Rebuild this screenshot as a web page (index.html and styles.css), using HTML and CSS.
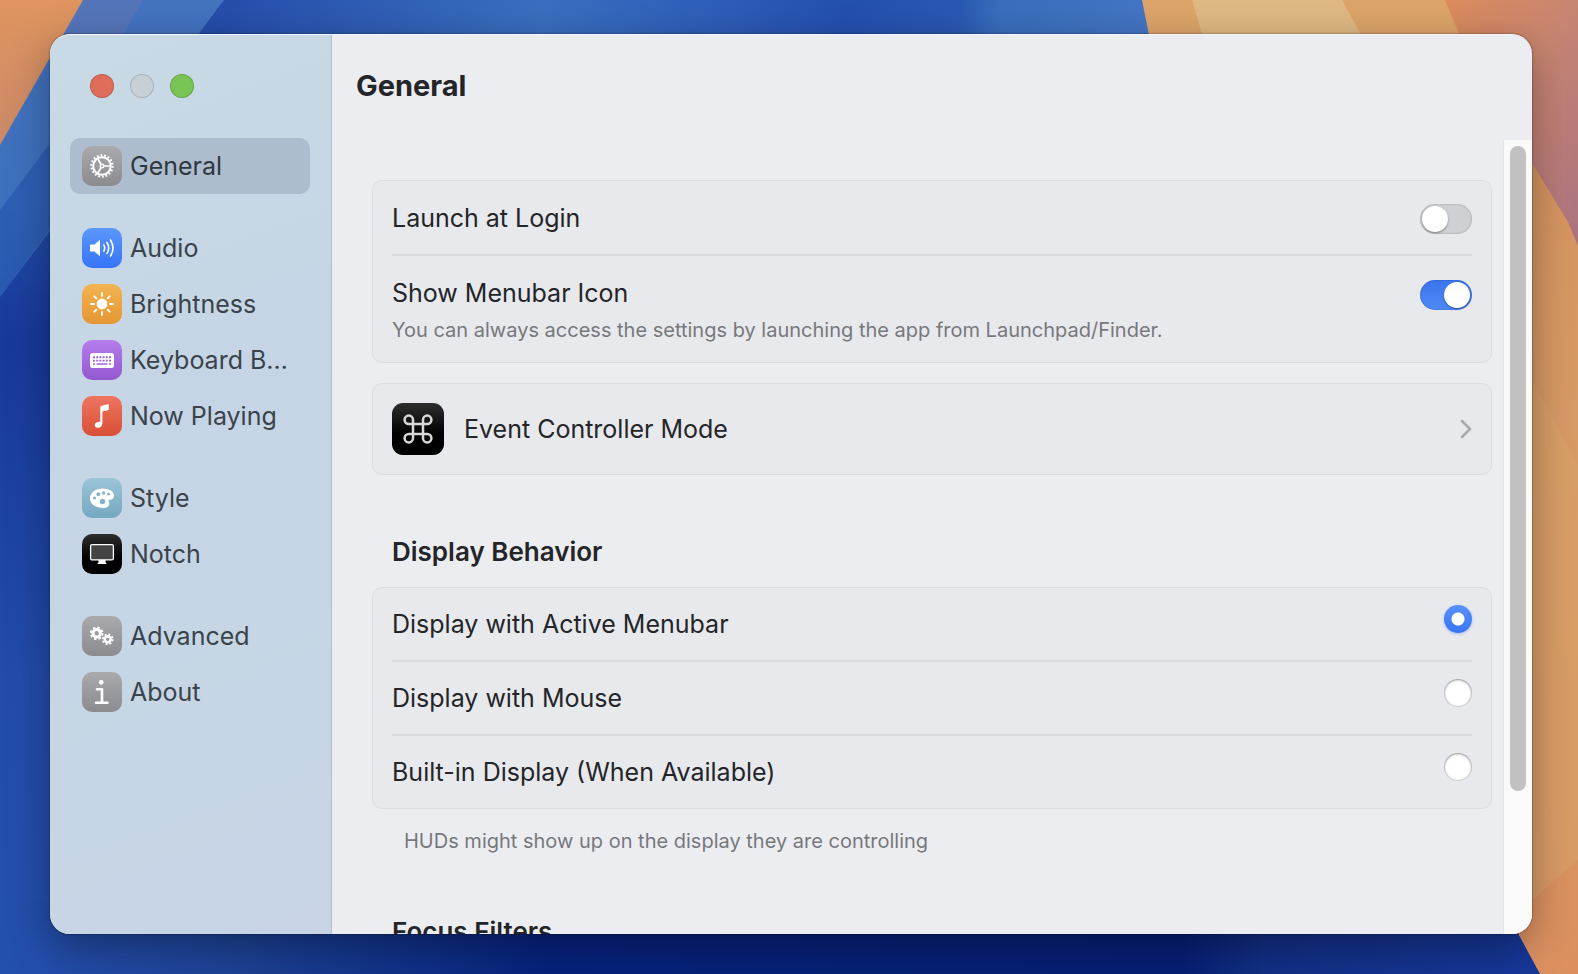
FILE: index.html
```html
<!DOCTYPE html>
<html lang="en">
<head>
  <meta charset="UTF-8" />
  <meta name="viewport" content="width=device-width, initial-scale=1.0"/>
  <title>General</title>
  <link rel="stylesheet" href="styles.css">
</head>
<body>
  <!-- Desktop wallpaper -->
  <svg class="wallpaper" viewBox="0 0 1578 974" preserveAspectRatio="none" aria-hidden="true">
    <defs>
      <linearGradient id="base" x1="0" y1="0" x2="0" y2="1">
        <stop offset="0" stop-color="#3566bd"/>
        <stop offset="0.35" stop-color="#17399a"/>
        <stop offset="0.7" stop-color="#234caa"/>
        <stop offset="1" stop-color="#2450ae"/>
      </linearGradient>
      <linearGradient id="top" x1="0" y1="0" x2="1" y2="0">
        <stop offset="0" stop-color="#244ca9"/>
        <stop offset="0.36" stop-color="#3b6ebf"/>
        <stop offset="0.5" stop-color="#3261ba"/>
        <stop offset="0.68" stop-color="#2450ae"/>
        <stop offset="0.8" stop-color="#2a58b2"/>
        <stop offset="0.84" stop-color="#3b6dbd"/>
        <stop offset="1" stop-color="#4475c4"/>
      </linearGradient>
      <linearGradient id="bottom" x1="0" y1="0" x2="1" y2="0">
        <stop offset="0" stop-color="#2450ae"/>
        <stop offset="0.15" stop-color="#1d4296"/>
        <stop offset="0.35" stop-color="#06227c"/>
        <stop offset="0.75" stop-color="#061f74"/>
        <stop offset="0.8" stop-color="#122f86"/>
        <stop offset="1" stop-color="#17389a"/>
      </linearGradient>
      <linearGradient id="peach" x1="0" y1="0" x2="0" y2="1">
        <stop offset="0" stop-color="#e0955f"/>
        <stop offset="1" stop-color="#c98868"/>
      </linearGradient>
      <linearGradient id="band" x1="0" y1="0" x2="0" y2="1">
        <stop offset="0" stop-color="#4473c0"/>
        <stop offset="0.7" stop-color="#3f70be"/>
        <stop offset="1" stop-color="#3160b4"/>
      </linearGradient>
      <linearGradient id="rose" x1="0" y1="0" x2="1" y2="1">
        <stop offset="0" stop-color="#dc8c5c"/>
        <stop offset="0.5" stop-color="#c78472"/>
        <stop offset="1" stop-color="#a97282"/>
      </linearGradient>
      <linearGradient id="sand" x1="0" y1="0" x2="0" y2="1">
        <stop offset="0" stop-color="#d4935f"/>
        <stop offset="0.35" stop-color="#d89a66"/>
        <stop offset="1" stop-color="#dc9060"/>
      </linearGradient>
    </defs>
    <rect width="1578" height="974" fill="url(#base)"/>
    <rect x="200" width="950" height="60" fill="url(#top)"/>
    <rect y="900" width="1578" height="74" fill="url(#bottom)"/>
    <polygon points="83,0 224,0 0,297 0,140" fill="url(#band)"/>
    <polygon points="83,0 143,0 120,40 60,40" fill="#5c76b8" opacity="0.7"/>
    <polygon points="0,210 60,130 60,215 0,297" fill="#2453ae" opacity="0.6"/>
    <polygon points="0,0 83,0 0,145" fill="url(#peach)"/>
    <polygon points="1142,0 1578,0 1578,600 1400,200 1150,40" fill="#dda46a"/>
    <polygon points="1192,0 1342,0 1364,40 1204,40" fill="#e0b884"/>
    <polygon points="1445,0 1578,0 1578,260 1532,180 1470,60" fill="url(#rose)"/>
    <polygon points="1500,120 1532,163 1568,222 1578,246 1578,974 1540,974 1500,900" fill="url(#sand)"/>
    <polygon points="1500,330 1532,380 1578,465 1578,860 1532,900 1500,900" fill="#d8a068" opacity="0.7"/>
  </svg>

  <div class="window">
    <aside class="sidebar">
      <div class="traffic-lights">
        <button type="button" class="light close" aria-label="Close"></button>
        <button type="button" class="light minimize" aria-label="Minimize" disabled></button>
        <button type="button" class="light maximize" aria-label="Zoom"></button>
      </div>

      <nav>
        <div class="nav-group">
          <a href="#general" class="nav-item active">
            <span class="icon gray">
              <svg viewBox="0 0 40 40" fill="none" stroke="#fff">
                <circle cx="20" cy="20" r="8.800" stroke-width="2"/>
                <circle cx="20" cy="20" r="10.600" stroke-width="2.200" stroke-dasharray="1.800 1.900"/>
                <circle cx="20" cy="20" r="1.800" stroke-width="1.400"/>
                <path d="M22 20h7M19 18.300l-3.600-6.100M19 21.700l-3.600 6.100" stroke-width="1.700"/>
              </svg>
            </span>
            <span class="nav-label">General</span>
          </a>
        </div>

        <div class="nav-group">
          <a href="#audio" class="nav-item">
            <span class="icon blue">
              <svg viewBox="0 0 40 40" fill="none" stroke="#fff" stroke-linecap="round">
                <path d="M9 16.500h3.500l4.500-4q1-.7 1 .5v14q0 1.200-1 .5l-4.500-4H9q-1 0-1-1v-5q0-1 1-1z" fill="#fff" stroke="none"/>
                <path d="M21.800 17q1.800 3 0 6M25 14.500q3.400 5.500 0 11M28.500 12q5 8 0 16" stroke-width="1.600"/>
              </svg>
            </span>
            <span class="nav-label">Audio</span>
          </a>
          <a href="#brightness" class="nav-item">
            <span class="icon orange">
              <svg viewBox="0 0 40 40" stroke="#fff" stroke-linecap="round" stroke-width="1.800">
                <circle cx="20" cy="20" r="5.400" fill="#fff" stroke="none"/>
                <path d="M20 9v3M20 28v3M9 20h3M28 20h3M12.300 12.300l2 2M25.700 25.700l2 2M27.700 12.300l-2 2M14.300 25.700l-2 2"/>
              </svg>
            </span>
            <span class="nav-label">Brightness</span>
          </a>
          <a href="#keyboard" class="nav-item">
            <span class="icon purple">
              <svg viewBox="0 0 40 40" fill="none">
                <rect x="8" y="13" width="24" height="15" rx="2.500" fill="#fff"/>
                <path d="M11 17.300h18M11 20.600h18" stroke="#a063dc" stroke-width="1.900" stroke-dasharray="2 1.200"/>
                <path d="M11 24h2M14.500 24h11M27 24h2" stroke="#a063dc" stroke-width="1.700"/>
              </svg>
            </span>
            <span class="nav-label">Keyboard Brightness</span>
          </a>
          <a href="#now-playing" class="nav-item">
            <span class="icon red">
              <svg viewBox="0 0 40 40" fill="#fff">
                <path d="M18.300 11.200q0-1.200 1.200-1.500l6.300-1.500q1-.2 1 .8v4q0 1-1 1.200l-5.400 1.300v11.300c0 3-2 5-4.600 5-1.800 0-3.100-1.100-3.100-2.700 0-1.700 1.200-2.700 3.200-3.100l1.400-.3q1-.2 1-1.300z"/>
              </svg>
            </span>
            <span class="nav-label">Now Playing</span>
          </a>
        </div>

        <div class="nav-group">
          <a href="#style" class="nav-item">
            <span class="icon teal">
              <svg viewBox="0 0 40 40">
                <path d="M20.500 10.500c6.500 0 11.500 3 11.500 7 0 3-2 4.300-4 4.300-1.300 0-1.700.7-1.200 1.800.8 1.900 1.200 6.400-5.300 6.400C14 30 8 26.500 8 20.500c0-6 5.500-10 12.500-10z" fill="#fff"/>
                <g fill="#83b3ca">
                  <circle cx="12.500" cy="20" r="1.600"/>
                  <circle cx="16.300" cy="16.200" r="1.900"/>
                  <circle cx="21.700" cy="15" r="1.700"/>
                  <circle cx="26.500" cy="16.200" r="1.400"/>
                  <circle cx="20.500" cy="23.500" r="2.700"/>
                </g>
              </svg>
            </span>
            <span class="nav-label">Style</span>
          </a>
          <a href="#notch" class="nav-item">
            <span class="icon black">
              <svg viewBox="0 0 40 40" fill="#fff">
                <rect x="8.600" y="10.600" width="22.800" height="15.300" rx="1.500" fill="#444" stroke="#fff" stroke-width="1.300"/>
                <path d="M16.500 26h7v2.500q1 .2 1 1.500h-9q0-1.300 1-1.500z"/>
              </svg>
            </span>
            <span class="nav-label">Notch</span>
          </a>
        </div>

        <div class="nav-group">
          <a href="#advanced" class="nav-item">
            <span class="icon gray">
              <svg viewBox="0 0 40 40" fill="none" stroke="#fff">
                <circle cx="14.700" cy="17.300" r="3.700" stroke-width="3"/>
                <circle cx="14.700" cy="17.300" r="5.800" stroke-width="2" stroke-dasharray="2.400 2.155"/>
                <circle cx="25.700" cy="23.300" r="3" stroke-width="2.600"/>
                <circle cx="25.700" cy="23.300" r="4.900" stroke-width="1.800" stroke-dasharray="2 1.848"/>
              </svg>
            </span>
            <span class="nav-label">Advanced</span>
          </a>
          <a href="#about" class="nav-item">
            <span class="icon gray">
              <svg viewBox="0 0 40 40" fill="none" stroke="#fff" stroke-width="2.600" stroke-linecap="round" stroke-linejoin="round">
                <circle cx="19.200" cy="10.300" r="2.400" fill="#fff" stroke="none"/>
                <path d="M15 17.300h5v13.500M14 30.800h11.500"/>
              </svg>
            </span>
            <span class="nav-label">About</span>
          </a>
        </div>
      </nav>
    </aside>

    <main class="main">
      <header>
        <h1>General</h1>
      </header>

      <div class="scroll-area">
        <div class="content">
          <section class="card">
            <div class="row">
              <label for="launch">Launch at Login</label>
              <input type="checkbox" class="switch" id="launch">
            </div>
            <div class="row tall">
              <div class="text">
                <label for="menubar">Show Menubar Icon</label>
                <p>You can always access the settings by launching the app from Launchpad/Finder.</p>
              </div>
              <input type="checkbox" class="switch" id="menubar" checked>
            </div>
          </section>

          <button type="button" class="card mode">
            <span class="mode-icon">
              <svg viewBox="0 0 52 52" fill="none" stroke="#d8d8d8" stroke-width="2.500">
                <path d="M21 21v-4.200a4.200 4.200 0 1 0-4.200 4.200h18.400a4.200 4.200 0 1 0-4.200-4.200v18.400a4.200 4.200 0 1 0 4.200-4.200H16.800a4.200 4.200 0 1 0 4.200 4.200z"/>
              </svg>
            </span>
            <span class="mode-label">Event Controller Mode</span>
            <svg class="chevron" viewBox="0 0 12 20" fill="none" stroke="#a9aaad" stroke-width="2.600" stroke-linecap="round" stroke-linejoin="round">
              <path d="M2 2l8 8-8 8"/>
            </svg>
          </button>

          <h2>Display Behavior</h2>
          <section class="card">
            <div class="row option">
              <label for="active">Display with Active Menubar</label>
              <input type="radio" name="display" id="active" checked>
            </div>
            <div class="row option">
              <label for="mouse">Display with Mouse</label>
              <input type="radio" name="display" id="mouse">
            </div>
            <div class="row option">
              <label for="builtin">Built-in Display (When Available)</label>
              <input type="radio" name="display" id="builtin">
            </div>
          </section>
          <p class="note">HUDs might show up on the display they are controlling</p>

          <h2>Focus Filters</h2>
        </div>
        <div class="scrollbar"><div class="thumb"></div></div>
      </div>
    </main>
  </div>
</body>
</html>
```
FILE: styles.css
```css
* {
  box-sizing: border-box;
}
body {
  margin: 0;
  height: 100vh;
  padding: 34px 46px 40px 50px;
  overflow: hidden;
  font-family: Inter, "Liberation Sans", sans-serif;
  font-size: 25px;
  line-height: 32px;
  color: #242528;
}
h1, h2, p {
  margin: 0;
}
.wallpaper {
  position: absolute;
  inset: 0;
  width: 100%;
  height: 100%;
  z-index: -1;
}
.window {
  display: flex;
  height: 100%;
  border-top: 1px solid #f4f6f9;
  border-radius: 20px;
  overflow: hidden;
  background: #ecedf1;
  box-shadow: 0 0 2px rgba(0, 0, 0, 0.6), 0 12px 40px rgba(0, 0, 0, 0.35);
}

/* Sidebar */
.sidebar {
  flex: 0 0 282px;
  min-width: 0;
  padding: 39px 21px 0 20px;
  background: linear-gradient(160deg, #c8dae5, #c6d5e5 40%, #c6d6e5 70%, #c8d4e5);
  border-right: 1px solid #b3bfcb;
}
.traffic-lights {
  display: flex;
  gap: 16px;
  margin: 0 20px 40px;
}
.light {
  width: 24px;
  height: 24px;
  padding: 0;
  border: 1px solid rgba(0, 0, 0, 0.15);
  border-radius: 50%;
}
.close {
  background: #e06c5a;
}
.minimize {
  background: #c8d0d7;
}
.maximize {
  background: #78c454;
}
.nav-group {
  margin-bottom: 26px;
}
.nav-item {
  display: flex;
  align-items: center;
  gap: 8px;
  height: 56px;
  padding: 0 18px 0 12px;
  border-radius: 10px;
  color: #3a434b;
  text-decoration: none;
}
.nav-item.active {
  background: #aebdcd;
  color: #2f3840;
}
.nav-label {
  flex: 1;
  min-width: 0;
  overflow: hidden;
  white-space: nowrap;
  text-overflow: ellipsis;
}
.icon {
  flex: none;
  width: 40px;
  height: 40px;
  border-radius: 10px;
}
.icon svg, .mode-icon svg {
  display: block;
}
.gray {
  background: linear-gradient(#aaaaad, #8b8b90);
}
.blue {
  background: linear-gradient(#5b97fb, #3675f6);
}
.orange {
  background: linear-gradient(#f2b452, #e59633);
}
.purple {
  background: linear-gradient(#b57dec, #9457d0);
}
.red {
  background: linear-gradient(#ee7460, #d94f35);
}
.teal {
  background: linear-gradient(#9bc5d8, #74a8c0);
}
.black {
  background: linear-gradient(#2e2e2e, #000 60%);
}

/* Main pane */
.main {
  flex: 1;
  min-width: 0;
  display: flex;
  flex-direction: column;
}
header {
  flex: none;
  height: 105px;
  padding: 31px 24px;
}
h1 {
  font-size: 29px;
  line-height: 40px;
  font-weight: 700;
}
h2 {
  margin: 61px 20px 19px;
  font-size: 26px;
  line-height: 32px;
  font-weight: 600;
}
.scroll-area {
  flex: 1;
  min-height: 0;
  display: flex;
}
.content {
  flex: 1;
  min-width: 0;
  padding: 40px 11px 0 40px;
  overflow: hidden;
}
.scrollbar {
  flex: 0 0 29px;
  padding: 6px;
  background: #fafafa;
  border-left: 1px solid #e2e3e5;
}
.thumb {
  width: 16px;
  height: calc(100% - 137px);
  border-radius: 8px;
  background: #c1c1c1;
}
.card {
  padding: 0 19px;
  border: 1px solid #dcdde1;
  border-radius: 10px;
  background: #e8e9ed;
}
.row {
  display: flex;
  justify-content: space-between;
  align-items: center;
  height: 73px;
}
.row + .row {
  border-top: 2px solid #dbdce0;
}
.row.tall {
  height: 108px;
  align-items: flex-start;
  padding-top: 21px;
}
.text p {
  margin-top: 7px;
  font-size: 20px;
  line-height: 28px;
  color: #77787c;
}
.option:first-child {
  height: 72px;
}
.option + .option {
  height: 74px;
}
.option input {
  margin-bottom: 11px;
}
.note {
  margin: 18px 32px 0;
  font-size: 20px;
  line-height: 28px;
  color: #77787c;
}

/* Controls */
.switch {
  appearance: none;
  width: 52px;
  height: 30px;
  margin: 3px 0 0;
  padding: 2px;
  border-radius: 15px;
  background: #cfd0d4;
  box-shadow: inset 0 0 2px rgba(0, 0, 0, 0.3);
}
.switch::before {
  content: "";
  display: block;
  width: 26px;
  height: 26px;
  border-radius: 50%;
  background: #fff;
  box-shadow: 0 1px 2px rgba(0, 0, 0, 0.4);
}
.switch:checked {
  background: linear-gradient(#3a74ef, #4f8af8);
}
.switch:checked::before {
  margin-left: auto;
}
input[type="radio"] {
  appearance: none;
  width: 28px;
  height: 28px;
  margin-top: 0;
  margin-right: 0;
  border-radius: 50%;
  background: #fff;
  box-shadow: inset 0 0 1px 1px rgba(0, 0, 0, 0.15), inset 0 1px 3px rgba(0, 0, 0, 0.3);
}
input[type="radio"]:checked {
  background: radial-gradient(circle, #fff 6px, transparent 7px), linear-gradient(#5691fa, #3a74f5);
  box-shadow: 0 1px 3px rgba(58, 116, 245, 0.4);
}
.mode {
  display: flex;
  align-items: center;
  gap: 20px;
  width: 100%;
  height: 92px;
  margin-top: 20px;
  font: inherit;
  color: inherit;
  text-align: left;
}
.mode-icon {
  width: 52px;
  height: 52px;
  border-radius: 11px;
  background: linear-gradient(#2e2e2e, #000 60%);
}
.mode-label {
  flex: 1;
}
.chevron {
  width: 12px;
  height: 20px;
}
```
